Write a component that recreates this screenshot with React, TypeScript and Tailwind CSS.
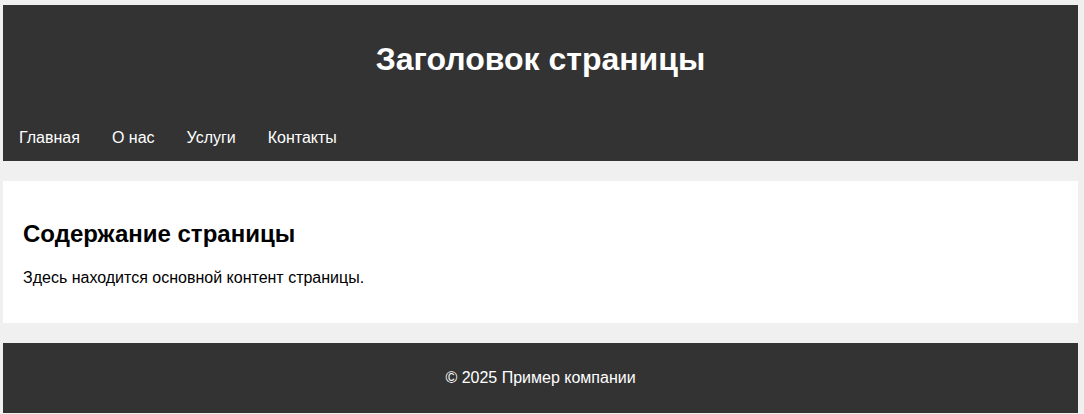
import React from "react";

export default function App() {
  return (
    <div
      className="min-h-[414px] bg-[#f0f0f0] pt-[5px] pl-[3px] pr-[6px] pb-px text-black"
      style={{ fontFamily: '"Liberation Sans", Arial, sans-serif' }}
    >
      <header className="bg-[#333333] text-white">
        <div className="pt-[36px]">
          <h1 className="text-center text-[32px] font-bold leading-[37px]">Заголовок страницы</h1>
        </div>
        <nav className="flex pt-[51px] pb-[14px] text-[16px] leading-[18px]">
          <a className="px-4 text-white">Главная</a>
          <a className="px-4 text-white">О нас</a>
          <a className="px-4 text-white">Услуги</a>
          <a className="px-4 text-white">Контакты</a>
        </nav>
      </header>

      <main className="mt-5 bg-white px-5 pt-[39px] pb-[36px]">
        <h2 className="text-[24px] font-bold leading-[28px]">Содержание страницы</h2>
        <p className="mt-[21px] text-[16px] leading-[18px]">Здесь находится основной контент страницы.</p>
      </main>

      <footer className="mt-5 bg-[#333333] py-[26px] text-center text-[16px] leading-[18px] text-white">
        © 2025 Пример компании
      </footer>
    </div>
  );
}
